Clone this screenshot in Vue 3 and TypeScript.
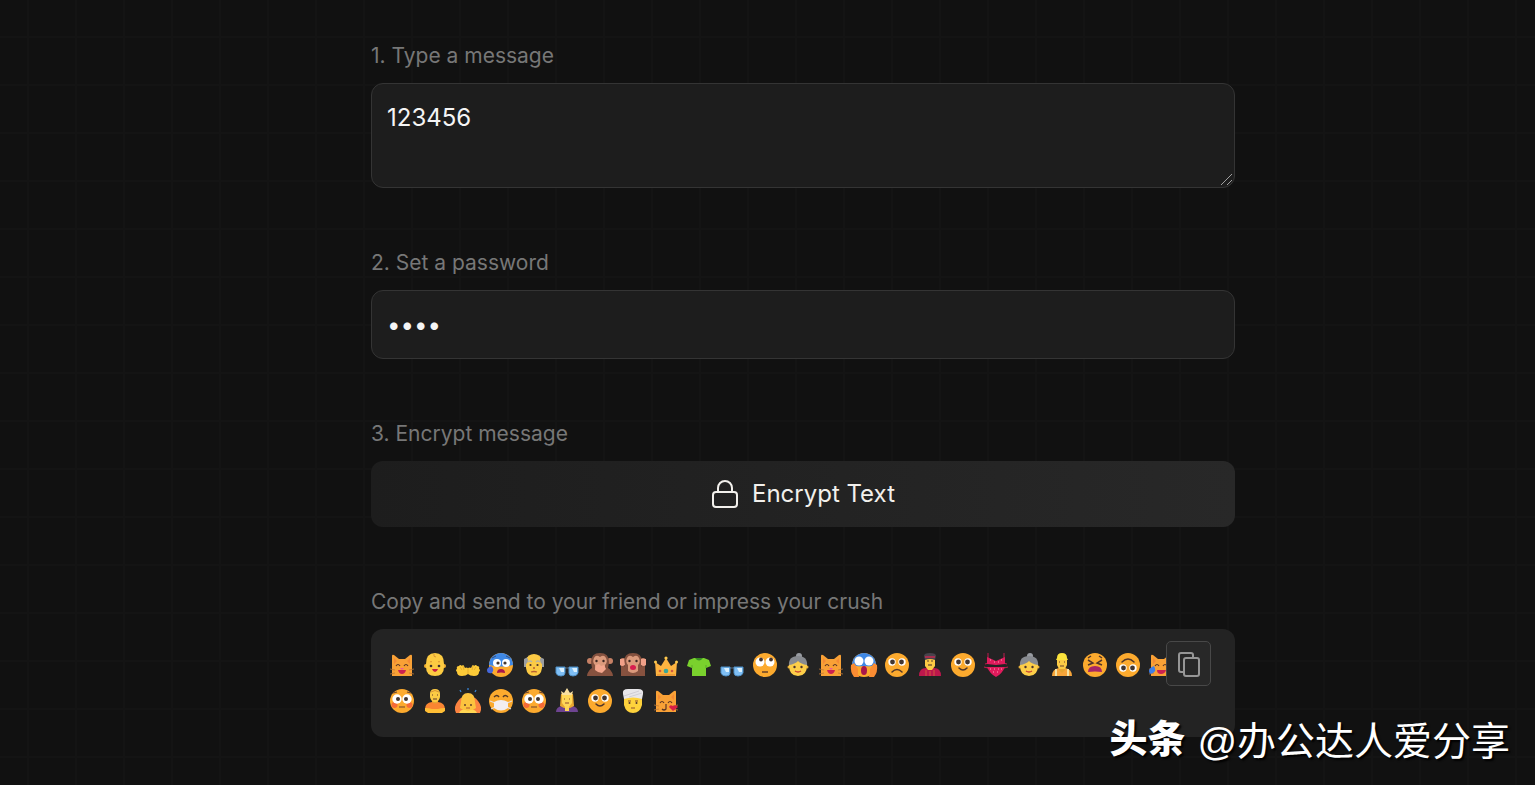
<script setup lang="ts">
import { ref } from 'vue'

const message = ref('123456')
const password = ref('1234')

const labels: Record<string, string> = {
  cat: '😸', baby: '👶', hands: '👐', sweat: '😰', oldman: '👴', glasses: '👓',
  speak: '🙊', hear: '🙉', crown: '👑', shirt: '👕', roll: '🙄', granny: '👵',
  scream: '😱', frown: '🙁', guard: '💂', smile: '🙂', bikini: '👙', worker: '👷',
  tired: '😫', upside: '🙃', joycat: '😹', flushed: '😳', pray: '🧘', bow: '🙇',
  mask: '😷', princess: '👸', turban: '👳', kisscat: '😽',
}

const encrypted: string[] = [
  'cat', 'baby', 'hands', 'sweat', 'oldman', 'glasses', 'speak', 'hear', 'crown', 'shirt', 'glasses', 'roll',
  'granny', 'cat', 'scream', 'frown', 'guard', 'smile', 'bikini', 'granny', 'worker', 'tired', 'upside', 'joycat',
  'flushed', 'pray', 'bow', 'mask', 'flushed', 'princess', 'smile', 'turban', 'kisscat',
]

function copyResult(): void {
  navigator.clipboard?.writeText(encrypted.map((n) => labels[n]).join(''))
}
</script>

<template>
  <main class="page">
    <svg class="sprite" aria-hidden="true">
      <symbol id="cathead" viewBox="0 0 24 24">
        <path d="M2 23V3q0-2 2-1l5 4h6l5-4q2-1 2 1v20z" fill="#f9a136" />
        <path d="M4 5l3 3-3 3zM20 5l-3 3 3 3z" fill="#f58a35" />
        <path d="M0 16l5 1M0 21l5-1M24 16l-5 1M24 21l-5-1" stroke="#bd7937" stroke-width="0.8" />
      </symbol>
      <symbol id="cat" viewBox="0 0 24 24">
        <use href="#cathead" />
        <path d="M6 13q2-3 4 0M14 13q2-3 4 0" fill="none" stroke="#5b3525" stroke-width="1.2" />
        <path d="M8 17h8q-1 4-4 4t-4-4z" fill="#cc2151" />
        <path d="M10 15h4l-2 2z" fill="#f45c91" />
      </symbol>
      <symbol id="joycat" viewBox="0 0 24 24">
        <use href="#cathead" />
        <path d="M6 13q2-3 4 0M14 13q2-3 4 0" fill="none" stroke="#5b3525" stroke-width="1.2" />
        <path d="M8 17h9q-1 4-5 4t-4-4z" fill="#cc2151" />
        <path d="M5 13q3 5-1 7t-4-2q0-3 5-5z" fill="#3f7fe8" />
      </symbol>
      <symbol id="kisscat" viewBox="0 0 24 24">
        <use href="#cathead" />
        <path d="M6 14q2-3 4 0M14 14q2-3 4 0M12 15v5q-2 2-4 0" fill="none" stroke="#5b3525" stroke-width="1.2" />
        <path d="M19 22l-4-4q1-3 4-1 3-2 5 1z" fill="#d81e45" />
      </symbol>
      <symbol id="baby" viewBox="0 0 24 24">
        <circle cx="3" cy="13" r="2" fill="#f1af32" /><circle cx="21" cy="13" r="2" fill="#f1af32" />
        <path d="M3 11q0-11 9-11t9 11v3q0 9-9 9t-9-9z" fill="#fccb42" />
        <path d="M11 1q-1 3 2 3M7 9q1-1 2 0M15 9q1-1 2 0" fill="none" stroke="#d99533" />
        <circle cx="8" cy="13" r="1.3" fill="#41302c" /><circle cx="16" cy="13" r="1.3" fill="#41302c" />
        <path d="M9 16h6q-1 3-3 3t-3-3z" fill="#c91f42" />
      </symbol>
      <symbol id="hands" viewBox="0 0 24 24">
        <path d="M12 15q2-1 3 0l1-2q1-2 2 0 2-2 3 0 3 0 2 3 2 1 0 3 0 4-5 4-4 0-6-2-2 2-6 2-5 0-5-4-2-2 0-3-1-3 2-3 1-2 3 0 1-2 2 0l1 2q1-1 3 0z" fill="#fdcb38" />
        <path d="M4 14l2 3M7 13l1 4M20 14l-2 3M17 13l-1 4M12 15v6" fill="none" stroke="#e0a52c" stroke-width="0.8" />
      </symbol>
      <symbol id="oldman" viewBox="0 0 24 24">
        <path d="M2 12q-1-6 5-9h10q6 3 5 9v2H2z" fill="#9b9da0" />
        <path d="M4 7q2-6 8-6t8 6v8q-1 8-8 8t-8-8z" fill="#fcca44" />
        <path d="M2 6q3-2 4 0 0 4-2 5H2zM22 6q-3-2-4 0 0 4 2 5h2z" fill="#9b9da0" />
        <path d="M6 9q2-2 4 0M14 9q2-2 4 0" fill="none" stroke="#b9b3a0" stroke-width="1.5" />
        <circle cx="8.500" cy="12" r="1.1" fill="#4b332d" /><circle cx="15.500" cy="12" r="1.1" fill="#4b332d" />
        <path d="M11 15h2M9 19q3-1 6 0" fill="none" stroke="#b75f32" stroke-width="1.3" />
      </symbol>
      <symbol id="glasses" viewBox="0 0 24 24">
        <path d="M1 15h22" stroke="#465563" stroke-width="1.5" />
        <path d="M1 14h9v6q0 3-4 3t-5-3zM14 14h9v6q-1 3-5 3t-4-3z" fill="#7fbff5" stroke="#4f8fc5" />
        <path d="M4 15h5v4H6zM17 15h5v4h-3z" fill="#d9f0ff" />
      </symbol>
      <symbol id="monkey" viewBox="0 0 24 24">
        <circle cx="2" cy="8" r="3" fill="#c58065" /><circle cx="22" cy="8" r="3" fill="#c58065" />
        <path d="M3 9q0-9 9-9t9 9l-1 6q4 2 4 8H0q0-6 4-8z" fill="#84513f" />
        <path d="M12 4q4-3 6 1 2 4-1 7v6q-5 4-10 0v-6q-3-3-1-7 2-4 6-1z" fill="#db9a7c" />
        <circle cx="8.500" cy="8" r="1.200" fill="#3d2722" /><circle cx="15.500" cy="8" r="1.200" fill="#3d2722" />
      </symbol>
      <symbol id="speak" viewBox="0 0 24 24">
        <use href="#monkey" />
        <path d="M-1 23q0-5 6-7l4 1h6l4-1q6 2 6 7h-8l-5-3-5 3z" fill="#87523f" />
        <path d="M7 17l1-5 3-1 2 2 3-1 2 4-4 4-4-1z" fill="#f3a68d" />
      </symbol>
      <symbol id="hear" viewBox="0 0 24 24">
        <use href="#monkey" />
        <path d="M0 12h3l2 4v7H0zM24 12h-3l-2 4v7h5z" fill="#87523f" />
        <path d="M-1 6h4l1 6q-3 2-5 0zM20 6h5v6q-2 2-5 0z" fill="#f0a088" />
        <ellipse cx="12" cy="14.500" rx="3" ry="2.500" fill="#d71d4f" />
      </symbol>
      <symbol id="crown" viewBox="0 0 24 24">
        <path d="M2 23L1 9l6 4 5-8 5 8 6-4-1 14z" fill="#fdb340" />
        <circle cx="12" cy="5" r="1.600" fill="#ffc94e" /><circle cx="1.500" cy="9" r="1.500" fill="#ffc94e" /><circle cx="22.500" cy="9" r="1.500" fill="#ffc94e" />
        <path d="M3 22h18" fill="none" stroke="#dd8330" />
        <circle cx="12" cy="18" r="2.300" fill="#3ba698" /><circle cx="6" cy="18" r="1.300" fill="#cf5941" /><circle cx="18" cy="18" r="1.300" fill="#cf5941" />
      </symbol>
      <symbol id="shirt" viewBox="0 0 24 24">
        <path d="M7 5h10l5 2 2 6-5 2v8H5v-8l-5-2 2-6z" fill="#7ad12d" />
        <path d="M8 5q4 5 8 0z" fill="#388d22" />
        <path d="M5 12v3M19 12v3" stroke="#5aaa29" />
      </symbol>
      <symbol id="face" viewBox="0 0 24 24"><circle cx="12" cy="12" r="12" fill="#fcaa2e" /></symbol>
      <symbol id="eyes" viewBox="0 0 24 24">
        <circle cx="7" cy="9" r="3.700" fill="#fff" /><circle cx="17" cy="9" r="3.700" fill="#fff" />
        <circle cx="7.500" cy="9" r="2.400" fill="#423631" /><circle cx="16.500" cy="9" r="2.400" fill="#423631" />
      </symbol>
      <symbol id="smile" viewBox="0 0 24 24">
        <use href="#face" /><use href="#eyes" />
        <path d="M8 15q4 4 8 0" fill="none" stroke="#513629" stroke-width="1.500" stroke-linecap="round" />
      </symbol>
      <symbol id="upside" viewBox="0 0 24 24"><g transform="rotate(180 12 12)"><use href="#face" /><use href="#eyes" /><path d="M6 15q6 6 12 0" fill="none" stroke="#513629" stroke-width="1.500" stroke-linecap="round" /></g></symbol>
      <symbol id="frown" viewBox="0 0 24 24">
        <use href="#face" /><use href="#eyes" />
        <path d="M7 19q5-5 10 0" fill="none" stroke="#513629" stroke-width="1.500" stroke-linecap="round" />
      </symbol>
      <symbol id="roll" viewBox="0 0 24 24">
        <use href="#face" /><circle cx="7" cy="9" r="4.500" fill="#fff" /><circle cx="17" cy="9" r="4.500" fill="#fff" />
        <circle cx="8" cy="6.500" r="1.900" fill="#47362f" /><circle cx="18" cy="6.500" r="1.900" fill="#47362f" />
        <path d="M9 19h6" stroke="#684029" stroke-width="1.500" />
      </symbol>
      <symbol id="flushed" viewBox="0 0 24 24">
        <use href="#face" />
        <circle cx="4.500" cy="16" r="3" fill="#f56b37" /><circle cx="19.500" cy="16" r="3" fill="#f56b37" />
        <circle cx="7" cy="10" r="4.700" fill="#fff" /><circle cx="17" cy="10" r="4.700" fill="#fff" />
        <circle cx="8" cy="10" r="2" fill="#433630" /><circle cx="16" cy="10" r="2" fill="#433630" />
        <path d="M3 4l4-1M17 3l4 1M9 18h6" stroke="#70452c" stroke-width="1.200" />
      </symbol>
      <symbol id="bluehead" viewBox="0 0 24 24"><use href="#face" /><path d="M0 12a12 12 0 0 1 24 0q-12 3-24 0z" fill="#3f88e5" /></symbol>
      <symbol id="sweat" viewBox="0 0 24 24">
        <use href="#bluehead" /><path d="M2 13q4 3 1 7-5 1-5-3 0-2 4-4z" fill="#4568dc" />
        <circle cx="8" cy="10" r="4" fill="#fff" /><circle cx="17" cy="10" r="4" fill="#fff" />
        <circle cx="9" cy="10" r="1.600" fill="#433630" /><circle cx="16" cy="10" r="1.600" fill="#433630" />
        <path d="M3 5l4-2M17 3l4 2" stroke="#324f83" /><path d="M8 20q0-4 4-4t4 4q-4-1-8 0z" fill="#a9164c" />
      </symbol>
      <symbol id="scream" viewBox="0 0 24 24">
        <use href="#bluehead" /><circle cx="7" cy="8" r="4.500" fill="#fff" /><circle cx="17" cy="8" r="4.500" fill="#fff" />
        <path d="M-1 12l3-2 4 6 1 8H2q-4-5-3-12zM25 12l-3-2-4 6-1 8h5q4-5 3-12z" fill="#fa8c32" />
        <path d="M6 15q6-4 12 0v7H6z" fill="#fcaa2e" />
        <ellipse cx="12" cy="17.500" rx="3" ry="4.500" fill="#a9174a" />
      </symbol>
      <symbol id="tired" viewBox="0 0 24 24">
        <use href="#face" />
        <path d="M5 7l5 3-5 2M19 7l-5 3 5 2M5 5l3-2M19 5l-3-2" fill="none" stroke="#50352b" stroke-width="1.500" />
        <path d="M5 19q0-6 7-6t7 6q-7-1-14 0z" fill="#a72666" />
      </symbol>
      <symbol id="mask" viewBox="0 0 24 24">
        <use href="#face" />
        <path d="M1 12l5 2M23 12l-5 2M2 20l4-2M22 20l-4-2" stroke="#e5ddda" stroke-width="1.200" />
        <path d="M5 8q3-3 5 0M14 8q2-3 5 0" fill="none" stroke="#533827" stroke-width="1.400" />
        <path d="M5 13q7-4 14 0v6q-7 5-14 0z" fill="#f3eef0" />
      </symbol>
      <symbol id="granny" viewBox="0 0 24 24">
        <circle cx="13" cy="3" r="3" fill="#989ba1" />
        <path d="M3 13Q2 3 12 3t9 10l-2 3H5z" fill="#888b90" />
        <circle cx="3" cy="14" r="1.500" fill="#e6ad38" /><circle cx="21" cy="14" r="1.500" fill="#e6ad38" />
        <path d="M3 12q6-1 9-4 3 3 9 4 0 11-9 11T3 12z" fill="#fdce49" />
        <circle cx="8.500" cy="14" r="1.200" fill="#4b342c" /><circle cx="15.500" cy="14" r="1.200" fill="#4b342c" />
        <path d="M9 18q3 2 6 0" fill="none" stroke="#c64132" stroke-width="1.300" />
      </symbol>
      <symbol id="guard" viewBox="0 0 24 24">
        <path d="M1 23q0-8 7-8h8q7 0 7 8z" fill="#bc174c" /><path d="M7 6h10v7l-3 4h-4l-3-4z" fill="#fcc944" />
        <path d="M6 3q0-3 6-3t6 3l-1 4q-5-2-10 0z" fill="#48434c" /><path d="M7 4h10" stroke="#c42650" stroke-width="1.500" />
        <circle cx="10" cy="8" r="0.800" fill="#4a302b" /><circle cx="14" cy="8" r="0.800" fill="#4a302b" /><path d="M10 12h4" stroke="#3d2b2b" />
        <path d="M12 18v5M8 17v6M16 17v6" stroke="#d9673f" stroke-width="0.800" />
      </symbol>
      <symbol id="bikini" viewBox="0 0 24 24">
        <path d="M4 0v6M20 0v6M1 11l4-1M23 11l-4-1M0 14l4 1M24 14l-4 1" stroke="#bf1d4e" />
        <path d="M3 4l9 4 9-4v7l-9 1-9-1zM3 14h18q-3 7-9 10-6-3-9-10z" fill="#df1b5c" />
        <path d="M6 7h1M10 9h1M14 9h1M17 7h1M6 16h1M10 16h1M14 16h1M17 16h1M9 19h1M13 19h1" stroke="#ff9fb8" />
      </symbol>
      <symbol id="worker" viewBox="0 0 24 24">
        <path d="M2 23q0-7 7-8h6q7 1 7 8z" fill="#f7a53a" /><path d="M6 16v7M18 16v7" stroke="#f6e3a4" stroke-width="2" />
        <path d="M9 12h6v5l-3 3-3-3z" fill="#e7a530" /><path d="M7 6h10v6l-2 4H9l-2-4z" fill="#fccb45" />
        <path d="M7 5q0-5 5-5t5 5l1 2H6z" fill="#fbe33c" />
        <path d="M9 9h1M14 9h1M10 13h4" stroke="#694032" />
      </symbol>
      <symbol id="pray" viewBox="0 0 24 24">
        <path d="M9 9h6v6H9z" fill="#e7a530" />
        <path d="M2 20q0-6 7-7 3 3 6 0 7 1 7 7l-3 2H5z" fill="#fa8532" />
        <path d="M7 5q0-5 5-5t5 5v3q-1 5-5 5t-5-5z" fill="#fccb44" /><path d="M8 3q4-3 8 0" fill="none" stroke="#da9436" />
        <path d="M2 19q4 0 7 1h6q3-1 7-1v3l-3 2H5l-3-2z" fill="#ffbe35" />
        <path d="M9 6h1M14 6h1M10 10h4" stroke="#5f392a" />
      </symbol>
      <symbol id="bow" viewBox="0 0 24 24">
        <path d="M0 24q-3-6 2-12 3-5 6-3h8q3-2 6 3 5 6 2 12z" fill="#fb8340" /><path d="M5 13Q5 4 12 4t7 9l1 6-8 5-8-5z" fill="#fcc33f" />
        <path d="M3 24q2-4 6-3l3 1 3-1q4-1 6 3z" fill="#ffd653" /><path d="M5 3L4 1M12 1v-2M19 3l1-2" stroke="#3982d0" stroke-width="1.300" />
        <circle cx="9" cy="16" r="0.900" fill="#53332b" /><circle cx="15" cy="16" r="0.900" fill="#53332b" /><path d="M10 19h4" stroke="#b25a31" />
      </symbol>
      <symbol id="princess" viewBox="0 0 24 24">
        <path d="M1 23q0-5 6-6h10q6 1 6 6z" fill="#6e4491" /><path d="M6 5h12l1 12-4 2H9l-4-2z" fill="#e9a831" />
        <path d="M7 6h10v8l-3 4v4h-4v-4l-3-4z" fill="#ffd757" /><path d="M7 6L6 2l3 2 3-5 3 5 3-2-1 4z" fill="#f9dfa0" />
        <path d="M9 10h1M14 10h1M10 14h4" stroke="#904c30" />
      </symbol>
      <symbol id="turban" viewBox="0 0 24 24">
        <path d="M3 8h18v8q-2 8-9 8t-9-8z" fill="#fed23c" />
        <path d="M2 5Q1 0 7 0h10q6 0 5 5l-1 5q-9-3-18 0z" fill="#e7e6e9" />
        <path d="M3 7L18 2M8 8l13-4" stroke="#c9c7ce" stroke-width="0.800" />
        <path d="M7 12h3M14 12h3M10 19h4" stroke="#8f512d" stroke-width="1.200" />
        <circle cx="8.500" cy="14" r="1" fill="#55362e" /><circle cx="15.500" cy="14" r="1" fill="#55362e" />
      </symbol>
    </svg>

    <form class="steps" @submit.prevent>
      <div class="step">
        <label for="message">1. Type a message</label>
        <div class="area-wrap">
          <textarea id="message" v-model="message" class="field area"></textarea>
          <svg class="grip" viewBox="0 0 14 14" aria-hidden="true">
            <path d="M1 12L12 1M7 12l5-5" />
          </svg>
        </div>
      </div>
      <div class="step">
        <label for="password">2. Set a password</label>
        <input id="password" v-model="password" class="field" type="password" autocomplete="off" />
      </div>
      <div class="step">
        <label for="encrypt">3. Encrypt message</label>
        <button id="encrypt" class="encrypt" type="submit">
          <svg class="lock" viewBox="0 0 28 30" aria-hidden="true">
            <rect x="2" y="13" width="24" height="15" rx="3" />
            <path d="M7 13V9a7 7 0 0 1 14 0v4" />
          </svg>
          <span>Encrypt Text</span>
        </button>
      </div>
      <div class="step">
        <p class="label">Copy and send to your friend or impress your crush</p>
        <div class="output">
          <svg v-for="(name, i) in encrypted" :key="i" class="emoji" viewBox="0 0 24 24" role="img" :aria-label="labels[name]">
            <use :href="'#' + name" />
          </svg>
          <button class="copy" type="button" aria-label="Copy" @click="copyResult">
            <svg viewBox="0 0 24 28" aria-hidden="true">
              <path d="M6 22H4a2 2 0 0 1-2-2V5a2 2 0 0 1 2-2h10a2 2 0 0 1 2 2v3" />
              <rect x="7" y="8" width="15" height="18" rx="2" />
            </svg>
          </button>
        </div>
      </div>
    </form>

    <div class="watermark"><strong>头条</strong><span>@办公达人爱分享</span></div>
  </main>
</template>

<style>
body {
  margin: 0;
  background: #111;
  color-scheme: dark;
}
</style>

<style scoped>
.page {
  box-sizing: border-box;
  position: relative;
  min-height: 100vh;
  padding: 40px 0 48px 71px;
  background-color: #111;
  background-image:
    linear-gradient(to right, #141414 2px, transparent 2px),
    linear-gradient(to bottom, #141414 2px, transparent 2px);
  background-size: 48px 48px;
  background-position: 27px 36px;
  font-family: Inter, "Noto Sans CJK SC", sans-serif;
}
.sprite {
  position: absolute;
  width: 0;
  height: 0;
}
.sprite symbol {
  overflow: visible;
}
.steps {
  display: flex;
  flex-direction: column;
  gap: 59px;
  max-width: 864px;
  margin: 0 auto;
}
.step {
  display: flex;
  flex-direction: column;
  gap: 11px;
}
label,
.label {
  margin: 0;
  color: #777;
  font-size: 21px;
  font-weight: 400;
  line-height: 32px;
}
.field {
  box-sizing: border-box;
  width: 100%;
  height: 69px;
  margin: 0;
  padding: 16px 15px;
  border: 1px solid #343434;
  border-radius: 12px;
  outline: none;
  background: #1d1d1d;
  color: #f5f5f5;
  font-family: inherit;
  font-size: 24px;
  line-height: 36px;
}
.area-wrap {
  position: relative;
}
.area {
  display: block;
  height: 105px;
  resize: vertical;
}
.area::-webkit-resizer {
  background: transparent;
}
.grip {
  position: absolute;
  right: 1px;
  bottom: 1px;
  width: 14px;
  height: 14px;
  fill: none;
  stroke: #a0a0a0;
  stroke-width: 1;
  pointer-events: none;
}
.encrypt {
  display: flex;
  align-items: center;
  justify-content: center;
  gap: 13px;
  height: 66px;
  padding: 0;
  border: 0;
  border-radius: 12px;
  background: linear-gradient(to right, #1d1d1d, #282828);
  color: #f2f0ec;
  font-family: inherit;
  font-size: 24px;
  line-height: 36px;
}
.lock {
  width: 28px;
  height: 30px;
  fill: none;
  stroke: currentColor;
  stroke-width: 2;
}
.output {
  position: relative;
  display: flex;
  flex-wrap: wrap;
  gap: 12px 9px;
  padding: 24px 34px 24px 19px;
  border-radius: 12px;
  background: #232323;
}
.emoji {
  width: 24px;
  height: 24px;
  overflow: visible;
}
.copy {
  position: absolute;
  top: 12px;
  right: 24px;
  display: flex;
  align-items: center;
  justify-content: center;
  width: 45px;
  height: 45px;
  padding: 0;
  border: 1px solid #484848;
  border-radius: 5px;
  background: #282828;
  color: #969696;
}
.copy svg {
  width: 24px;
  height: 28px;
  fill: none;
  stroke: currentColor;
  stroke-width: 2;
}
.watermark {
  position: absolute;
  right: 25px;
  bottom: 15px;
  display: flex;
  align-items: flex-start;
  gap: 12px;
  color: #fff;
  font-family: "Liberation Sans", "Noto Sans CJK SC", sans-serif;
  font-size: 39px;
  line-height: 56px;
  text-shadow: 2px 2px 2px #000;
}
.watermark strong {
  font-size: 38px;
  font-weight: 900;
  line-height: 50px;
}
</style>
